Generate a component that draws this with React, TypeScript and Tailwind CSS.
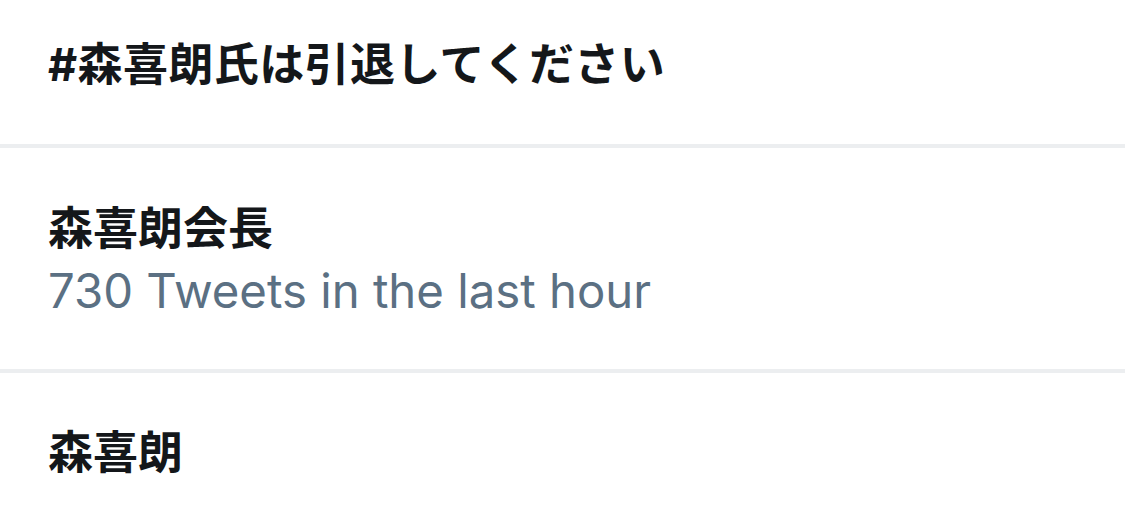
import React from "react";

const cjk = { fontFamily: '"Inter", "Noto Sans CJK JP", sans-serif' };

export default function App() {
  return (
    <div className="w-[1125px] h-[530px] bg-white overflow-hidden" style={cjk}>
      <div className="pl-[48px] pt-[36px] pb-[51px]">
        <div className="text-[45px] leading-[57px] font-bold text-[#14171a] tracking-[0.4px]">#森喜朗氏は引退してください</div>
      </div>
      <div className="h-[4px] bg-[#eceef0]" />
      <div className="pl-[48px] pt-[52px] pb-[47px]">
        <div className="text-[45px] leading-[57px] font-bold text-[#14171a]">森喜朗会長</div>
        <div className="mt-[3px] text-[47.3px] leading-[62px] text-[#5b7083]">730 Tweets in the last hour</div>
      </div>
      <div className="h-[4px] bg-[#eceef0]" />
      <div className="pl-[48px] pt-[51px]">
        <div className="text-[45px] leading-[57px] font-bold text-[#14171a]">森喜朗</div>
      </div>
    </div>
  );
}
